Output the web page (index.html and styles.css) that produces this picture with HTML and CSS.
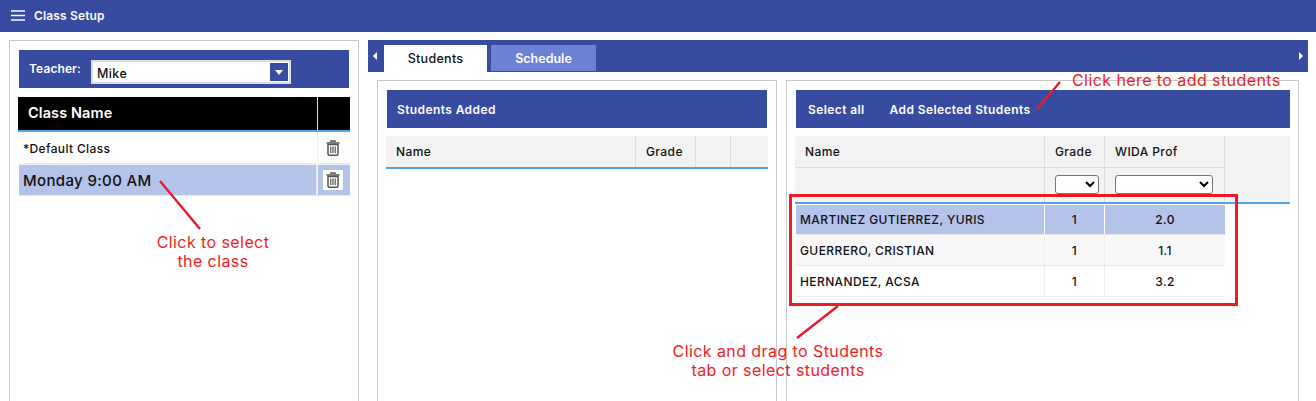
FILE: index.html
```html
<!DOCTYPE html>
<html lang="en">
<head>
<meta charset="utf-8">
<title>Class Setup</title>
<link rel="stylesheet" href="styles.css">
</head>
<body>
<header class="topbar">
  <svg class="burger" viewBox="0 0 14 11" width="14" height="11"><path d="M0 1h14M0 5.5h14M0 10h14" stroke="#fff" stroke-width="1.6"/></svg>
  <span class="app-title">Class Setup</span>
</header>
<main class="content">
  <section class="panel left">
    <div class="teacher-bar">
      <span class="teacher-label">Teacher:</span>
      <div class="fake-select">
        <span class="select-value">Mike</span>
        <span class="select-btn"><svg viewBox="0 0 8 5" width="8" height="5"><path d="M0 0h8L4 5z" fill="#fff"/></svg></span>
      </div>
    </div>
    <div class="class-head"><div class="ch-name">Class Name</div><div class="ch-act"></div></div>
    <div class="class-row">
      <div class="cr-name small">*Default Class</div>
      <div class="cr-act"><svg class="trash" viewBox="0 0 14 16" width="14" height="16"><use href="#trash"/></svg></div>
    </div>
    <div class="class-row selected">
      <div class="cr-name large">Monday 9:00 AM</div>
      <div class="cr-act"><span class="trash-box"><svg class="trash" viewBox="0 0 14 16" width="14" height="16"><use href="#trash"/></svg></span></div>
    </div>
  </section>
  <section class="right">
    <div class="tabbar">
      <svg class="tab-arrow" viewBox="0 0 4 8" width="4" height="8"><path d="M4 0v8L0 4z" fill="#fff"/></svg>
      <div class="tab active">Students</div>
      <div class="tab">Schedule</div>
      <svg class="tab-arrow end" viewBox="0 0 4 8" width="4" height="8"><path d="M0 0v8l4-4z" fill="#fff"/></svg>
    </div>
    <div class="panes">
      <section class="panel pane-a">
        <div class="action-bar"><span>Students Added</span></div>
        <div class="grid-head added">
          <div>Name</div><div>Grade</div><div></div><div></div>
        </div>
      </section>
      <section class="panel pane-b">
        <div class="action-bar"><span>Select all</span><span>Add Selected Students</span></div>
        <div class="roster-head">
          <div class="rh-grid">
            <div class="rh-cell">Name</div><div class="rh-cell">Grade</div><div class="rh-cell">WIDA Prof</div>
            <div class="rh-filter"></div>
            <div class="rh-filter"><select class="filter grade-f"><option></option></select></div>
            <div class="rh-filter"><select class="filter wida-f"><option></option></select></div>
          </div>
        </div>
        <div class="roster-row selected"><div>MARTINEZ GUTIERREZ, YURIS</div><div>1</div><div>2.0</div></div>
        <div class="roster-row alt"><div>GUERRERO, CRISTIAN</div><div>1</div><div>1.1</div></div>
        <div class="roster-row"><div>HERNANDEZ, ACSA</div><div>1</div><div>3.2</div></div>
      </section>
    </div>
  </section>
</main>

<svg class="defs" width="0" height="0" aria-hidden="true">
  <symbol id="trash" viewBox="0 0 14 16">
    <path d="M5 2V1h4v1M0.500 3h13" fill="none" stroke="#555" stroke-width="1.500"/>
    <path d="M2 4.500h10V14a1.200 1.200 0 0 1-1.200 1.200H3.200A1.200 1.200 0 0 1 2 14z" fill="none" stroke="#555" stroke-width="1.500"/>
    <path d="M4.800 6.500v6.500M7 6.500v6.500M9.200 6.500v6.500" stroke="#555" stroke-width="1.200"/>
  </symbol>
</svg>

<svg class="marks" width="1316" height="401" viewBox="0 0 1316 401" aria-hidden="true">
  <path d="M160 181 200 229M1037 109 1060 82M838 306 797 338" stroke="#e8192c" stroke-width="2.400" fill="none"/>
  <rect x="790.500" y="195.500" width="446" height="109" fill="none" stroke="#ed1c24" stroke-width="3"/>
</svg>
<div class="note note-select">Click to select<br>the class</div>
<div class="note note-add">Click here to add students</div>
<div class="note note-drag">Click and drag to Students<br>tab or select students</div>
</body>
</html>
```
FILE: styles.css
```css
* { box-sizing: border-box; }
html, body { margin: 0; height: 401px; overflow: hidden; }
body {
  position: relative;
  font-family: Inter, "Open Sans", sans-serif;
  font-size: 13px;
  color: #111;
  background: #fff;
}
.topbar {
  height: 32px;
  background: #374ba1;
  color: #fff;
  display: flex;
  align-items: center;
  padding: 0 0 1px 11px;
  gap: 9px;
}
.burger { display: block; }
.app-title { font-weight: 600; font-size: 12px; letter-spacing: .15px; }
.content {
  display: flex;
  gap: 9px;
  padding: 8px 8px 0 9px;
  height: 369px;
}
.panel {
  border: 1px solid #c8c8c8;
  border-bottom: 0;
  background: #fff;
}
.left { width: 350px; padding: 9px 8px 0 8px; flex: none; }
.teacher-bar {
  margin: 0 1px;
  height: 38px;
  background: #374ba1;
  display: flex;
  align-items: center;
  padding-left: 10px;
  color: #fff;
}
.teacher-label { font-weight: 600; font-size: 12px; width: 62px; margin-top: -2px; letter-spacing: .1px; }
.fake-select {
  width: 200px;
  height: 24px;
  margin-top: 6px;
  background: #fff;
  border: 2px solid #dcdcdc;
  color: #111;
  display: flex;
  align-items: center;
  justify-content: space-between;
  padding: 0 1px 0 4px;
  font-size: 12.500px;
}
.select-value { padding-top: 2px; font-weight: 500; letter-spacing: .4px; }
.select-btn {
  width: 18px;
  height: 18px;
  background: #374ba1;
  display: flex;
  align-items: center;
  justify-content: center;
}
.select-btn svg { display: block; }
.class-head {
  margin-top: 9px;
  height: 35px;
  background: #000;
  border-bottom: 2px solid #4ea4e4;
  color: #fff;
  display: flex;
  width: 332px;
}
.ch-name { width: 300px; padding: 7px 10px 0; font-weight: 600; font-size: 14.500px; letter-spacing: .1px; border-right: 1px solid #ddd; }
.ch-act { flex: 1; }
.class-row {
  display: flex;
  width: 332px;
  height: 33px;
  border-bottom: 2px solid #eee;
}
.class-row.selected {
  height: 31px;
  margin-left: 1px;
  width: 331px;
  background: #b3c3ea;
  border-bottom: 1px solid #e9e9e9;
}
.cr-name { width: 300px; display: flex; align-items: center; padding-left: 5px; border-right: 1px solid #eee; }
.selected .cr-name { width: 299px; padding-left: 4px; border-right: 2px solid #eee; }
.cr-name.small { font-size: 12px; font-weight: 500; letter-spacing: .35px; padding-top: 2px; }
.cr-name.large { font-size: 15px; font-weight: 500; letter-spacing: .35px; }
.cr-act { flex: 1; display: flex; align-items: center; justify-content: center; padding-right: 2px; }
.trash { display: block; }
.trash-box { width: 20px; height: 20px; background: #fff; display: flex; align-items: center; justify-content: center; }
.right { flex: 1; min-width: 0; }
.tabbar {
  height: 32px;
  background: #374ba1;
  display: flex;
  align-items: flex-end;
  gap: 4px;
  padding-left: 5px;
}
.tab-arrow { align-self: center; margin-right: 3px; display: block; }
.tab-arrow.end { margin: 0 5px 0 auto; }
.tab {
  width: 105px;
  height: 26px;
  margin-bottom: 1px;
  background: #6b81d4;
  color: #fff;
  font-weight: 600;
  font-size: 12.500px;
  display: flex;
  align-items: center;
  justify-content: center;
}
.tab.active {
  width: 103px;
  height: 27px;
  margin-bottom: 0;
  background: #fff;
  color: #111;
  font-weight: 500;
  letter-spacing: .3px;
}
.panes {
  display: flex;
  gap: 9px;
  padding: 8px 9px 0;
  height: 329px;
}
.pane-a { width: 400px; flex: none; padding: 9px 8px 0 8px; }
.pane-b { flex: 1; min-width: 0; padding: 9px 8px 0 8px; }
.action-bar {
  margin: 0 1px;
  height: 38px;
  background: #374ba1;
  color: #fff;
  font-weight: 600;
  font-size: 12px;
  letter-spacing: .4px;
  display: flex;
  align-items: center;
  padding-left: 10px;
}
.pane-b .action-bar { padding-left: 12px; gap: 25px; margin-right: 0; }
.grid-head {
  margin-top: 8px;
  height: 33px;
  background: #f3f3f3;
  border-bottom: 2px solid #4ea4e4;
  display: grid;
  grid-template-columns: 250px 60px 35px 1fr;
  align-items: stretch;
}
.grid-head > div { padding: 8px 0 0 10px; font-weight: 500; font-size: 12px; letter-spacing: .4px; border-right: 1px solid #ddd; }
.grid-head > div:last-child { border-right: 0; }
.roster-head {
  margin-top: 8px;
  height: 68px;
  background: #f3f3f3;
  border-bottom: 2px solid #4ea4e4;
  margin-bottom: 1px;
}
.rh-grid {
  display: grid;
  width: 430px;
  grid-template-columns: 250px 60px 120px;
  grid-template-rows: 32px 34px;
}
.rh-cell {
  padding: 8px 0 0 10px;
  font-weight: 500;
  font-size: 12px;
  letter-spacing: .4px;
  border-right: 1px solid #ddd;
  border-bottom: 1px solid #ddd;
}
.rh-filter { border-right: 1px solid #ddd; padding: 7px 0 0 10px; }
.filter {
  display: block;
  height: 19px;
  background: #fff;
  border: 1px solid #767676;
  border-radius: 3px;
  margin: 0;
  padding: 0;
}
.grade-f { width: 44px; }
.wida-f { width: 98px; }
.roster-row {
  display: grid;
  width: 429px;
  margin-left: 1px;
  grid-template-columns: 249px 60px 120px;
  height: 31px;
  border-bottom: 1px solid #e8e8e8;
  font-weight: 500;
  font-size: 12px;
  letter-spacing: .4px;
  align-items: center;
}
.roster-row > div { height: 100%; display: flex; align-items: center; justify-content: center; border-right: 1px solid #eee; }
.roster-row > div:first-child { justify-content: flex-start; padding-left: 4px; }
.roster-row > div:last-child { border-right: 0; }
.roster-row.selected { background: #b3c3ea; height: 30px; }
.roster-row.selected > div { border-right: 1px solid #fff; }
.roster-row.selected > div:last-child { border-right: 0; }
.roster-row.alt { background: #f8f8f8; }
.defs { position: absolute; }
.marks { position: absolute; left: 0; top: 0; pointer-events: none; }
.note {
  position: absolute;
  color: #ed1c24;
  font-size: 16px;
  font-weight: 400;
  letter-spacing: .42px;
  line-height: 19px;
  text-align: center;
  white-space: nowrap;
}
.note-select { left: 113px; width: 200px; top: 233px; }
.note-add { left: 1072px; top: 71px; }
.note-drag { left: 628px; width: 300px; top: 342px; }
```
